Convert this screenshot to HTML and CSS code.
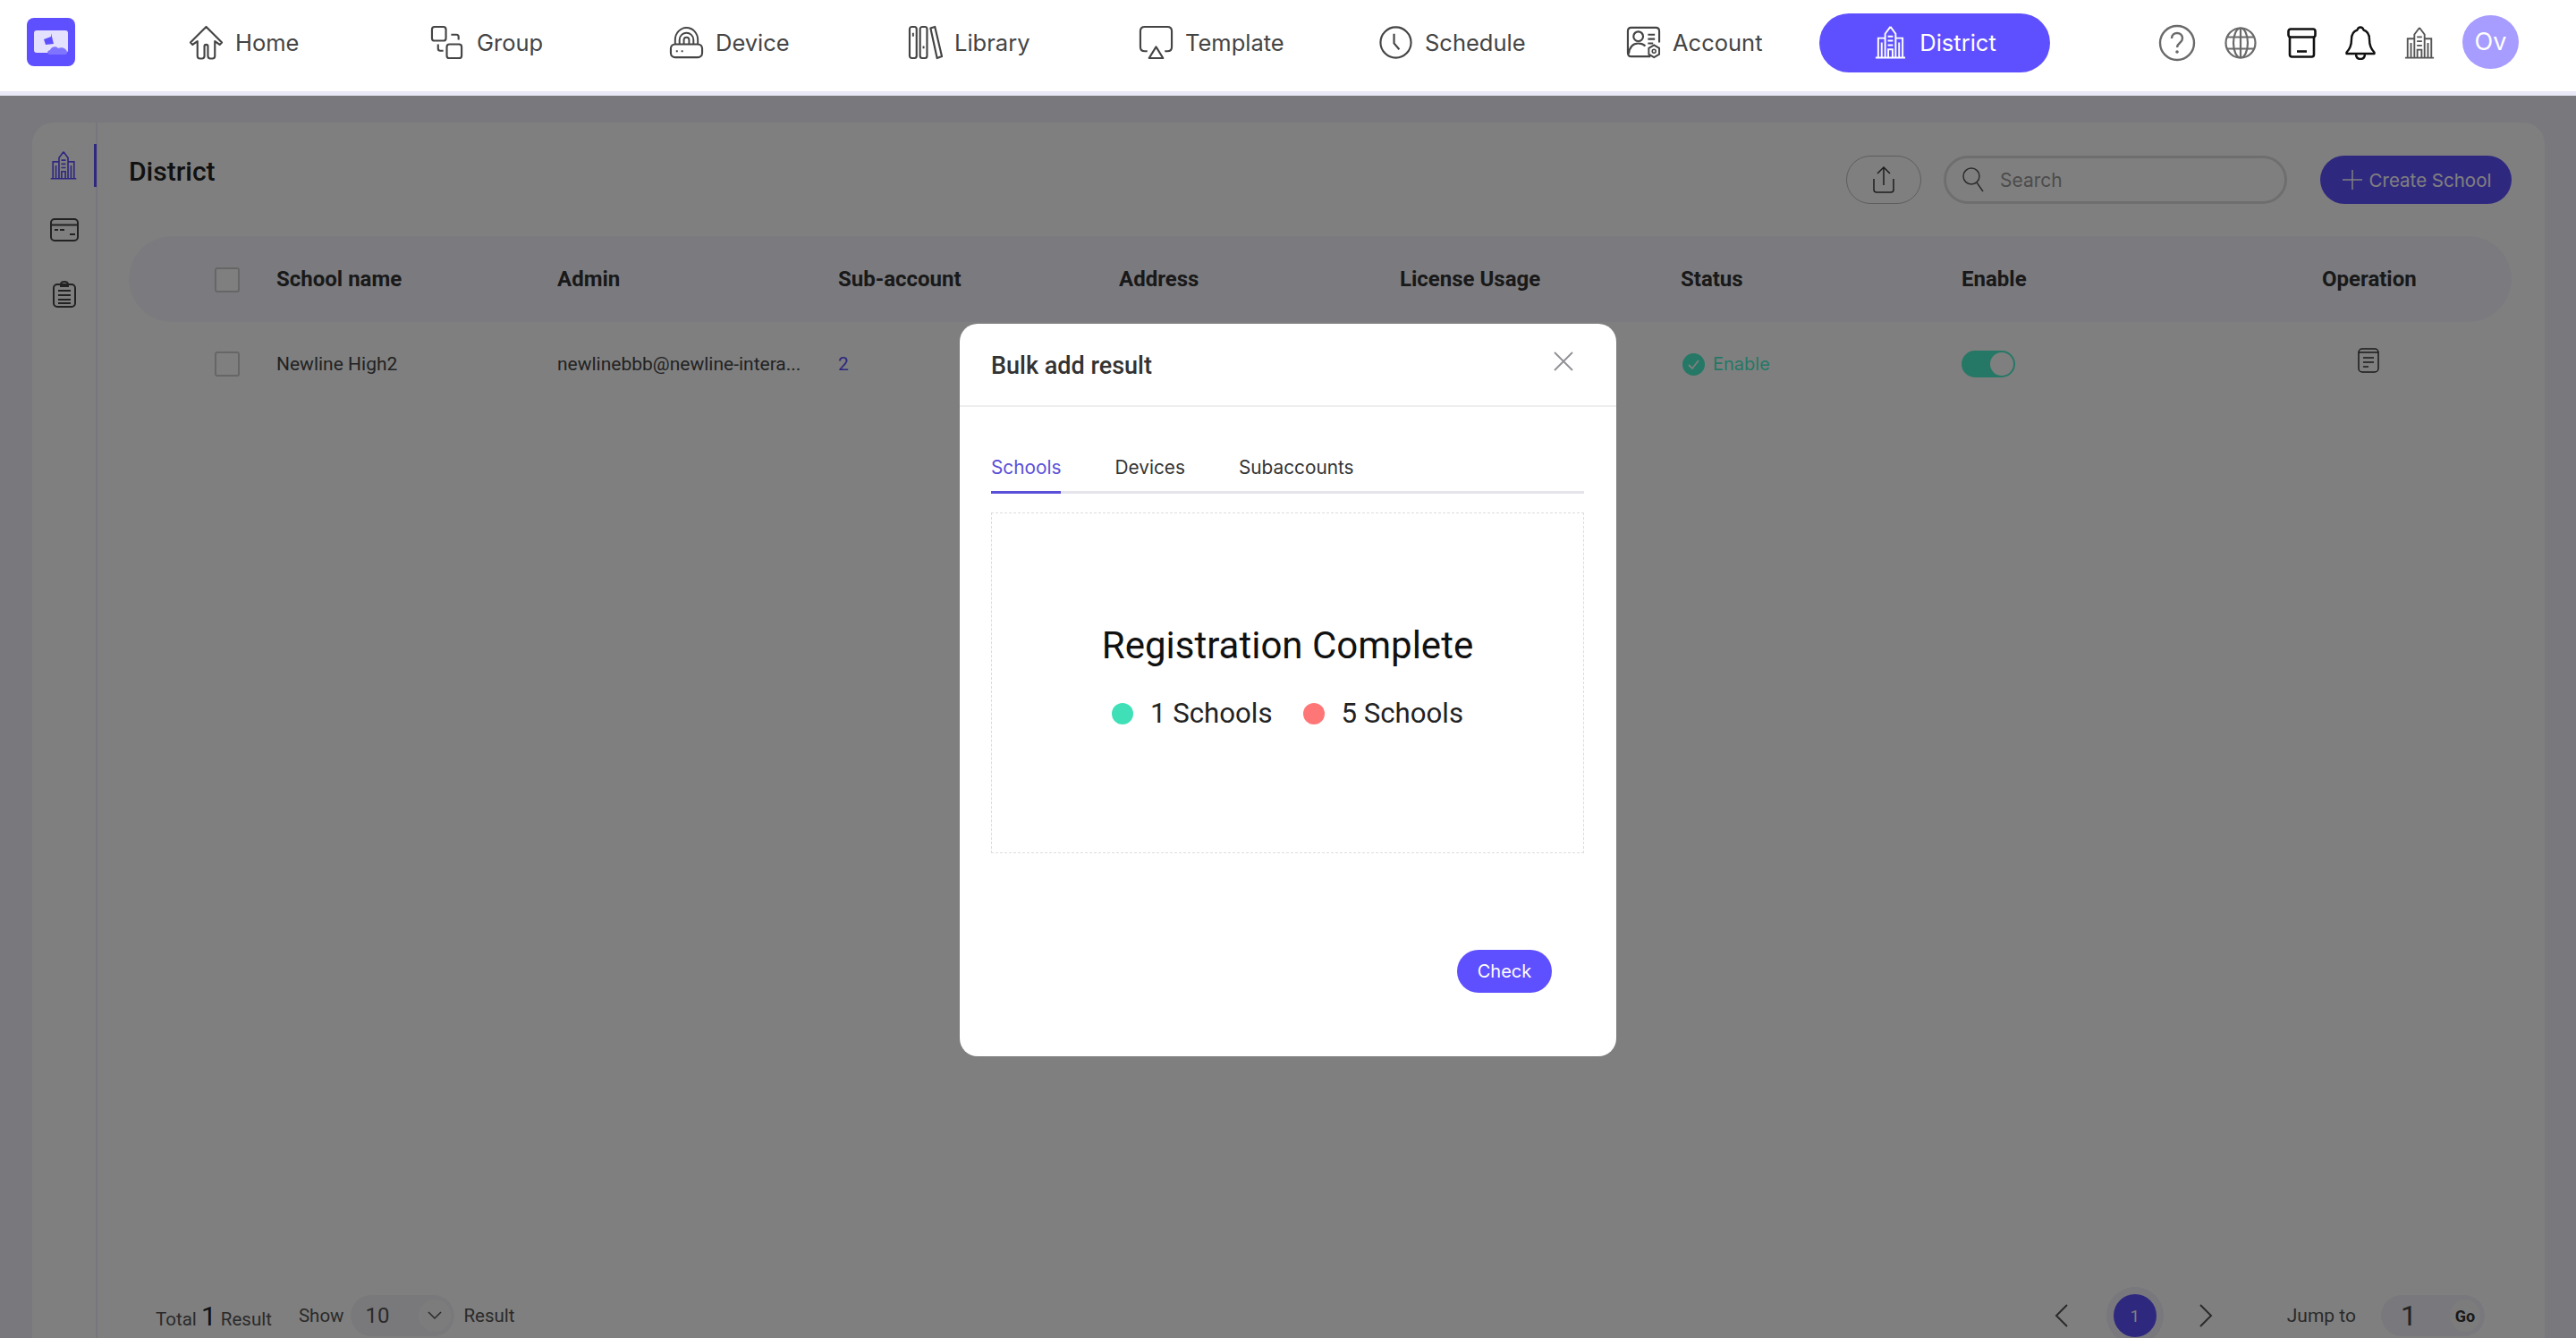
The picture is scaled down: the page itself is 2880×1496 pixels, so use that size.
FILE: index.html
```html
<!DOCTYPE html>
<html lang="en">
<head>
<meta charset="utf-8">
<title>District</title>
<link rel="stylesheet" href="styles.css">
</head>
<body>
<svg class="defs" width="0" height="0" aria-hidden="true">
  <symbol id="building" viewBox="0 0 40 38">
    <path d="M20 1l6 8v27M20 1l-6 8v27M3 36.500h34M14 14H6v22M26 14h8v22M17 12h6M17 17h6M17 22h6M17.500 36V27h5v9M10 19v17M30 19v17" fill="none" stroke="currentColor" stroke-width="2"/>
  </symbol>
</svg>

<header class="topbar">
  <div class="logo">
    <svg viewBox="0 0 54 54" width="54" height="54">
      <rect width="54" height="54" rx="8" fill="#5f50ff"/>
      <rect x="8" y="14" width="38" height="25" rx="3" fill="#e4e1ff"/>
      <path d="M19 24l8-3v-4l3 12-9 1z" fill="#5f50ff"/>
      <path d="M25 41c-3-1-2-5 1-5 1-4 7-5 9-2 4-2 9 0 10 4 0 2-1 3-2 3z" fill="#7f74ff"/>
    </svg>
  </div>
  <nav class="nav">
    <a class="nav-item">
      <svg class="nav-icon" viewBox="0 0 40 40"><path d="M20 2L2 20l2.500 2.500 5.500-4v17c0 2 1 3 3 3h2c2 0 3-1 3-3V24c0-2 4-2 4 0v11.500c0 2 1 3 3 3h2c2 0 3-1 3-3v-17l5.500 4L38 20z" fill="none" stroke="currentColor" stroke-width="2.200" stroke-linejoin="round"/></svg>
      <span>Home</span>
    </a>
    <a class="nav-item">
      <svg class="nav-icon" viewBox="0 0 40 40"><rect x="2" y="2" width="16" height="16" rx="3" fill="none" stroke="currentColor" stroke-width="2.200"/><rect x="19" y="22" width="17" height="16" rx="3" fill="none" stroke="currentColor" stroke-width="2.200"/><path d="M24 11h6c1.500 0 2.500 1 2.500 2.500V17M9 22v5c0 1.500 1 2.500 2.500 2.500H15" fill="none" stroke="currentColor" stroke-width="2.200"/></svg>
      <span>Group</span>
    </a>
    <a class="nav-item">
      <svg class="nav-icon" viewBox="0 0 40 40"><path d="M7 22v-5C7 9 13 3 20 3s13 6 13 14v5M12 22v-5c0-5 4-8 8-8s8 3 8 8v5M17 22v-5c0-2 1-3 3-3s3 1 3 3v5" fill="none" stroke="currentColor" stroke-width="2"/><rect x="2" y="22" width="36" height="15" rx="5" fill="#fff" stroke="currentColor" stroke-width="2.200"/><path d="M8 30h2M14 30h2" stroke="currentColor" stroke-width="2.200"/></svg>
      <span>Device</span>
    </a>
    <a class="nav-item">
      <svg class="nav-icon" viewBox="0 0 40 40"><rect x="2" y="2" width="8" height="36" rx="2.500" fill="none" stroke="currentColor" stroke-width="2.200"/><rect x="14" y="2" width="8" height="36" rx="2.500" fill="none" stroke="currentColor" stroke-width="2.200"/><path d="M26 3.500l5-1.500 8 34-5.500 2z" fill="none" stroke="currentColor" stroke-width="2.200" stroke-linejoin="round"/><path d="M6 9v4M18 24v3" stroke="currentColor" stroke-width="2"/></svg>
      <span>Library</span>
    </a>
    <a class="nav-item">
      <svg class="nav-icon" viewBox="0 0 40 40"><path d="M10 30H7c-3 0-5-2-5-5V7c0-3 2-5 5-5h26c3 0 5 2 5 5v18c0 3-2 5-5 5h-3" fill="none" stroke="currentColor" stroke-width="2.200"/><path d="M20 25l8 13H12z" fill="none" stroke="currentColor" stroke-width="2.200" stroke-linejoin="round"/></svg>
      <span>Template</span>
    </a>
    <a class="nav-item nav-item-schedule">
      <svg class="nav-icon" viewBox="0 0 40 40"><circle cx="20" cy="20" r="17.500" fill="none" stroke="currentColor" stroke-width="2.200"/><path d="M18 10v11l6 7" fill="none" stroke="currentColor" stroke-width="2.200"/></svg>
      <span>Schedule</span>
    </a>
    <a class="nav-item">
      <svg class="nav-icon" viewBox="0 0 40 40"><path d="M28 36H6c-2.500 0-4-1.500-4-4V7c0-2.500 1.500-4 4-4h28c2.500 0 4 1.500 4 4v13" fill="none" stroke="currentColor" stroke-width="2.200"/><circle cx="14" cy="13" r="5.500" fill="none" stroke="currentColor" stroke-width="2.200"/><path d="M3 33c1-8 5-12 11-12 3 0 6 1 8 3M25 11h8M25 16h8M25 21h6" fill="none" stroke="currentColor" stroke-width="2.200"/><path d="M32 23l6 3.500v7L32 37l-6-3.500v-7z" fill="#fff" stroke="currentColor" stroke-width="2"/><circle cx="32" cy="30" r="2" fill="none" stroke="currentColor" stroke-width="1.600"/></svg>
      <span>Account</span>
    </a>
    <a class="nav-item nav-item-active">
      <svg class="nav-icon"><use href="#building"/></svg>
      <span>District</span>
    </a>
  </nav>
  <div class="tools">
    <span class="tool"><svg width="42" height="42" viewBox="0 0 42 42"><circle cx="21" cy="21" r="19" fill="none" stroke="#6a6a6a" stroke-width="2.400"/><path d="M15 16c0-4 3-6 6-6s6 2 6 6c0 5-6 5-6 10" fill="none" stroke="#6a6a6a" stroke-width="2.400"/><circle cx="21" cy="31" r="1.800" fill="#6a6a6a"/></svg></span>
    <span class="tool"><svg width="36" height="36" viewBox="0 0 36 36"><g fill="none" stroke="#6a6a6a" stroke-width="2.200"><circle cx="18" cy="18" r="16.500"/><ellipse cx="18" cy="18" rx="8" ry="16.500"/><path d="M18 1.500v33M3 11.500h30M3 24.500h30"/></g></svg></span>
    <span class="tool"><svg width="33" height="34" viewBox="0 0 33 34"><g fill="none" stroke="#111" stroke-width="2.600"><rect x="1.500" y="1.500" width="30" height="9" rx="2.500"/><path d="M3 10.500V30c0 1.500 1 2.500 2.500 2.500h22c1.500 0 2.500-1 2.500-2.500V10.500"/><path d="M11 26.500h11"/></g></svg></span>
    <span class="tool"><svg width="34" height="38" viewBox="0 0 34 38"><path d="M17 1.500c-2 0-3 1.200-3.500 3C9 6 7 10 7 15c0 7-2 11-5.500 14.500v1.500h31v-1.500C29 26 27 22 27 15c0-5-2-9-6.500-10.500C20 2.700 19 1.500 17 1.500zM12 31c0 4 2 6 5 6s5-2 5-6" fill="none" stroke="#111" stroke-width="2.400" stroke-linejoin="round"/></svg></span>
    <span class="tool tool-building"><svg width="38" height="36"><use href="#building"/></svg></span>
    <span class="avatar">Ov</span>
  </div>
</header>

<main class="page">
  <section class="card">
    <aside class="side">
      <span class="side-item side-item-active"><svg width="34" height="32" class="side-building"><use href="#building"/></svg></span>
      <span class="side-item"><svg width="32" height="26" viewBox="0 0 32 26"><g fill="none" stroke="#454545" stroke-width="2"><rect x="1" y="1" width="30" height="24" rx="4"/><path d="M1 7.500h30M5 13h4M11 13h5M22 18h6"/></g></svg></span>
      <span class="side-item"><svg width="26" height="30" viewBox="0 0 26 30"><g fill="none" stroke="#454545" stroke-width="2"><rect x="1" y="4" width="24" height="25" rx="4"/><path d="M9 4c0-2 2-3 4-3s4 1 4 3v2H9zM6 11h14M6 16h14M6 21h14M6 25h14"/></g></svg></span>
    </aside>
    <div class="content">
      <div class="title-row">
        <h1 class="title">District</h1>
        <div class="actions">
          <button class="upload"><svg width="28" height="32" viewBox="0 0 28 32"><path d="M3 15v12c0 2 1 3 3 3h16c2 0 3-1 3-3V15M14 22V2M7 9l7-7 7 7" fill="none" stroke="#3a3a3a" stroke-width="1.500"/></svg></button>
          <div class="search">
            <svg width="26" height="30" viewBox="0 0 26 30"><circle cx="11" cy="11" r="9" fill="none" stroke="#5a5a5a" stroke-width="1.500"/><path d="M17 18l7 10" stroke="#5a5a5a" stroke-width="1.500"/></svg>
            <span>Search</span>
          </div>
          <button class="create"><svg width="24" height="24" viewBox="0 0 24 24"><path d="M12 1v22M1 12h22" stroke="#fff" stroke-width="1.500"/></svg><span>Create School</span></button>
        </div>
      </div>
      <div class="table-row table-head">
        <span class="check"></span>
        <span>School name</span><span>Admin</span><span>Sub-account</span><span>Address</span><span>License Usage</span><span>Status</span><span>Enable</span><span class="op-cell">Operation</span>
      </div>
      <div class="table-row table-body">
        <span class="check"></span>
        <span>Newline High2</span><span>newlinebbb@newline-intera...</span><span class="link">2</span><span></span><span></span>
        <span class="status"><svg width="25" height="25" viewBox="0 0 25 25"><circle cx="12.500" cy="12.500" r="12.500" fill="#4cf0cc"/><path d="M7 13l4 4 7-9" fill="none" stroke="#fff" stroke-width="1.800"/></svg>Enable</span>
        <span><span class="toggle"><span class="knob"></span></span></span>
        <span class="op-icon"><svg width="24" height="28" viewBox="0 0 24 28"><g fill="none" stroke="#333" stroke-width="1.500"><rect x="1" y="1" width="22" height="26" rx="4"/><path d="M1 5h22M6 11h12M6 16h12M6 21h6"/></g></svg></span>
      </div>
      <div class="footer">
        <div class="foot-left">
          <span class="total">Total <b>1</b> Result</span>
          <span class="show">Show</span>
          <span class="select"><span>10</span><i class="select-arrow"><svg width="16" height="10" viewBox="0 0 16 10"><path d="M1 1l7 7 7-7" fill="none" stroke="#555" stroke-width="1.500"/></svg></i></span>
          <span>Result</span>
        </div>
        <div class="foot-right">
          <svg width="15" height="26" viewBox="0 0 15 26"><path d="M14 1L2 13l12 12" fill="none" stroke="#555" stroke-width="2"/></svg>
          <span class="page-num">1</span>
          <svg width="15" height="26" viewBox="0 0 15 26"><path d="M1 1l12 12L1 25" fill="none" stroke="#555" stroke-width="2"/></svg>
          <span class="jump">Jump to</span>
          <span class="jump-box"><span class="jump-val">1</span><span class="go">Go</span></span>
        </div>
      </div>
    </div>
  </section>
</main>

<div class="overlay"></div>

<div class="modal">
  <div class="modal-head">
    <h2>Bulk add result</h2>
    <svg width="22" height="22" viewBox="0 0 22 22"><path d="M1 1l20 20M21 1L1 21" stroke="#8f8f95" stroke-width="1.800"/></svg>
  </div>
  <div class="modal-body">
    <div class="tabs">
      <span class="tab tab-active">Schools</span>
      <span class="tab">Devices</span>
      <span class="tab">Subaccounts</span>
    </div>
    <div class="result">
      <div class="result-title">Registration Complete</div>
      <div class="result-stats">
        <span class="dot dot-ok"></span><span class="stat">1 Schools</span>
        <span class="dot dot-bad"></span><span class="stat">5 Schools</span>
      </div>
    </div>
    <div class="modal-foot"><button class="check-btn">Check</button></div>
  </div>
</div>
</body>
</html>
```
FILE: styles.css
```css
* { box-sizing: border-box; }
html, body { margin: 0; height: 1496px; overflow: hidden; }
body { font-family: Roboto, "Liberation Sans", sans-serif; background: #f0f0fa; color: #222; position: relative; }
.defs { position: absolute; }
button { font: inherit; border: 0; padding: 0; }

.topbar { position: relative; z-index: 3; height: 107px; background: #fff; border-bottom: 5px solid #e9e8f6; display: flex; align-items: center; padding: 0 64px 7px 30px; }
.logo { width: 54px; height: 54px; flex: none; margin-top: -1px; }
.logo svg { display: block; }
.nav { display: grid; grid-template-columns: 270px 267px 267px 258px 270px 275px 216px 258px; margin-left: 127px; align-items: center; }
.nav-item { display: flex; align-items: center; gap: 13px; font-family: Inter, sans-serif; font-size: 25.500px; color: #444; }
.nav-item-schedule { margin-left: -2px; }
.nav-icon { width: 39px; height: 39px; flex: none; }
.nav-item-active { height: 66px; border-radius: 33px; background: #5f50ff; color: #fff; justify-content: center; }
.tools { display: grid; grid-template-columns: 70px 71px 66px 66px 66px 78px; margin-left: auto; align-items: center; }
.tool { display: flex; justify-content: center; align-items: center; }
.tool-building { color: #555; }
.avatar { margin-left: 15px; width: 63px; height: 60px; border-radius: 50%; background: #a79cff; color: #fff; display: flex; align-items: center; justify-content: center; font-size: 27px; font-family: Inter, sans-serif; margin-top: -2px; }

.page { padding: 30px 35px 0 36px; height: 1389px; }
.card { background: #fff; border-radius: 24px 24px 0 0; height: 1400px; display: flex; }
.side { width: 73px; flex: none; border-right: 2px solid #ececf8; padding-top: 24px; display: flex; flex-direction: column; align-items: stretch; }
.side-item { height: 48px; display: flex; align-items: center; justify-content: center; margin-bottom: 24px; padding-left: 1px; }
.side-item-active { border-right: 3px solid #5f50ff; margin-right: -1px; }
.side-building { color: #5f50ff; }
.content { flex: 1; padding: 37px 37px 0 35px; display: flex; flex-direction: column; }
.title-row { display: flex; justify-content: space-between; align-items: center; height: 54px; }
.title { font-size: 30px; font-weight: 500; margin: 0 0 20px; color: #222; }
.actions { display: flex; align-items: center; }
.upload { width: 84px; height: 54px; border-radius: 27px; background: #fff; border: 1px solid #bbb; display: flex; align-items: center; justify-content: center; margin-right: 25px; }
.search { width: 384px; height: 54px; border-radius: 27px; border: 3px solid #ddd; display: flex; align-items: center; gap: 17px; padding-left: 17px; color: #999; font-family: Inter, sans-serif; font-size: 21px; margin-right: 37px; }
.create { width: 214px; height: 54px; border-radius: 27px; background: #5f50ff; color: #fff; display: flex; align-items: center; justify-content: center; gap: 7px; padding-left: 1px; font-family: Inter, sans-serif; font-size: 20.500px; }
.table-row { display: grid; grid-template-columns: 165px repeat(7, 314px) 1fr; align-items: center; white-space: nowrap; }
.table-head { height: 96px; margin-top: 36px; border-radius: 48px; background: #f6f6ff; font-size: 24px; font-weight: 700; color: #333; }
.table-head > .check { margin-top: 2px; }
.table-body { height: 94px; font-size: 21px; color: #444; }
.check { justify-self: start; margin-left: 96px; width: 28px; height: 28px; border: 2px solid #ccc; border-radius: 3px; background: #fff; }
.link { color: #5f50ff; }
.status { display: flex; align-items: center; gap: 9px; padding-left: 2px; color: #4cf0cc; font-family: Inter, sans-serif; font-size: 20px; }
.toggle { display: block; width: 60px; height: 30px; border-radius: 15px; background: #4cf0cc; position: relative; }
.knob { position: absolute; right: 2px; top: 2px; width: 26px; height: 26px; border-radius: 50%; background: #fff; }
.op-cell { padding-left: 89px; }
.op-icon { padding-left: 129px; margin-top: -8px; line-height: 0; }
.footer { margin-top: auto; height: 89px; display: flex; justify-content: space-between; font-size: 20.500px; color: #555; }
.foot-left { display: flex; padding-left: 30px; height: 46px; align-items: center; }
.total { margin-right: 30px; }
.total b { font-size: 30px; font-weight: 400; color: #222; }
.show { margin-right: 8px; }
.select { width: 116px; height: 46px; border-radius: 23px; background: #f3f3f6; display: flex; align-items: center; justify-content: space-between; padding: 0 4px 0 16px; margin-right: 10px; font-size: 24px; }
.select-arrow { width: 36px; height: 36px; border-radius: 50%; background: #f8f8f8; display: flex; align-items: center; justify-content: center; }
.foot-right { display: flex; align-items: center; height: 46px; }
.page-num { width: 48px; height: 48px; border-radius: 50%; background: #5f50ff; color: #fff; box-shadow: 0 0 0 8px #f0f0fa; display: flex; align-items: center; justify-content: center; margin: 0 48px 0 51px; font-size: 18px; }
.jump { margin-left: 83px; margin-right: 28px; font-size: 21px; }
.jump-box { width: 116px; height: 46px; border-radius: 23px; background: #f1f1fa; display: flex; align-items: center; justify-content: space-between; padding: 0 5px 0 22px; margin-right: 30px; }
.jump-val { font-size: 32px; color: #444; }
.go { width: 34px; height: 36px; border-radius: 50%; background: #f8f8f8; display: flex; align-items: center; justify-content: center; font-size: 18px; font-weight: 700; color: #333; }

.overlay { position: absolute; left: 0; right: 0; top: 107px; bottom: 0; background: rgba(0,0,0,.5); z-index: 4; }
.modal { position: absolute; left: 1073px; top: 362px; width: 734px; height: 819px; background: #fff; border-radius: 20px; z-index: 5; display: flex; flex-direction: column; }
.modal-head { height: 93px; border-bottom: 2px solid #eeeeee; display: flex; justify-content: space-between; align-items: center; padding: 2px 48px 0 35px; }
.modal-head h2 { margin: 0; font-size: 27px; font-weight: 500; color: #333; }
.modal-head svg { margin-top: -10px; }
.modal-body { padding: 44px 36px 0 35px; flex: 1; display: flex; flex-direction: column; }
.tabs { display: flex; gap: 60px; border-bottom: 3px solid #e4e4ea; height: 53px; font-family: Inter, sans-serif; font-size: 20.800px; color: #333; }
.tab { height: 53px; padding-top: 11px; }
.tab-active { color: #5a4fd8; border-bottom: 3px solid #5a4fd8; }
.result { height: 381px; margin-top: 21px; border: 1px dashed #ddd; text-align: center; padding-top: 120px; }
.result-title { font-size: 42px; line-height: 56px; color: #111; }
.result-stats { display: flex; justify-content: center; align-items: center; margin-top: 29px; font-size: 31.200px; color: #222; }
.dot { width: 24px; height: 24px; border-radius: 50%; margin-right: 19px; }
.dot-ok { background: #3fe0b7; }
.dot-bad { background: #ff7676; }
.stat { margin-right: 34px; }
.stat:last-child { margin-right: 0; }
.modal-foot { display: flex; justify-content: flex-end; padding-right: 36px; margin-top: 108px; }
.check-btn { width: 106px; height: 48px; border-radius: 24px; background: #5f50ff; color: #fff; font-family: Inter, sans-serif; font-size: 20px; }
```
